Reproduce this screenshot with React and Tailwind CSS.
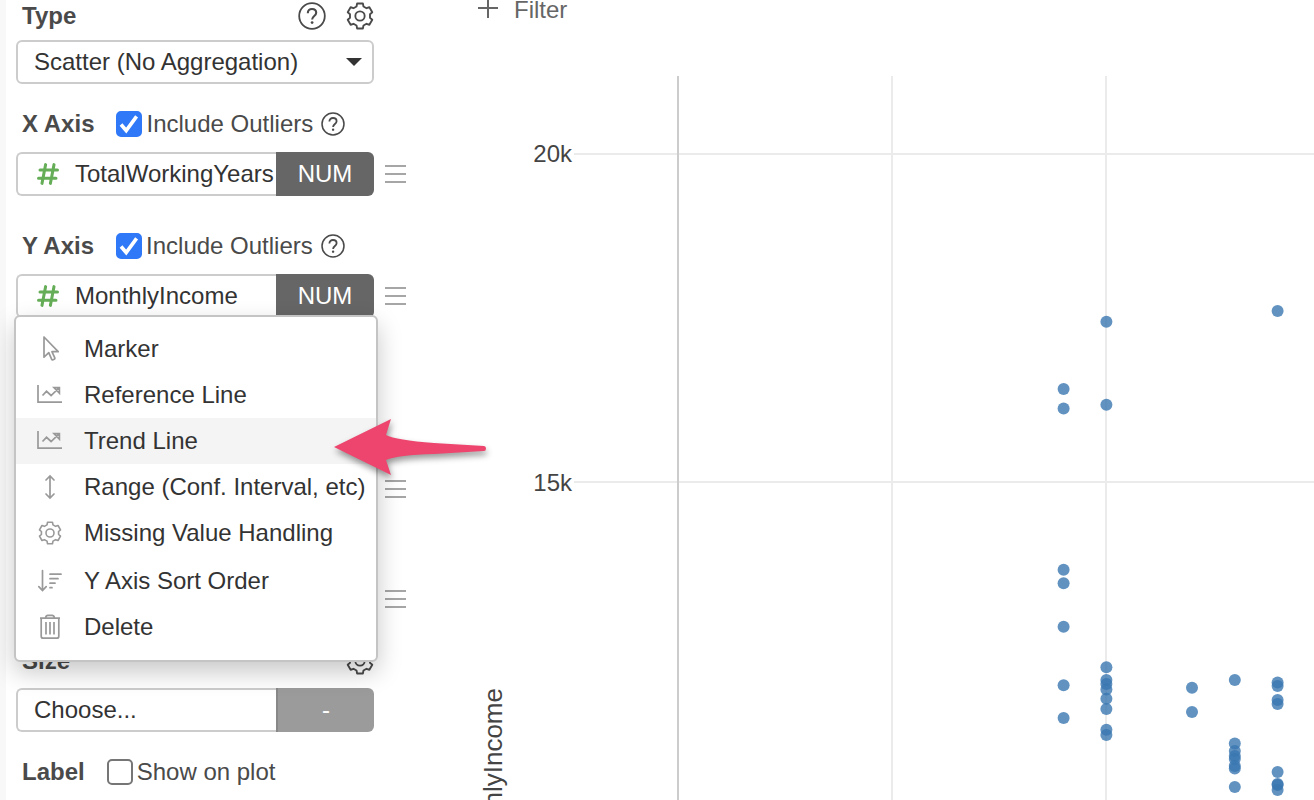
import React, { useState } from 'react';

const points = [
  [9, 16423], [9, 16126], [9, 13673], [9, 13466], [9, 12805], [9, 11913], [9, 11416],
  [10, 17448], [10, 16184], [10, 12187], [10, 11994], [10, 11933], [10, 11849], [10, 11709], [10, 11553], [10, 11237], [10, 11157],
  [12, 11875], [12, 11507],
  [13, 11994], [13, 11027], [13, 10913], [13, 10837], [13, 10791], [13, 10685], [13, 10647], [13, 10365],
  [14, 17610], [14, 11956], [14, 11903], [14, 11689], [14, 11629], [14, 10594], [14, 10411], [14, 10396], [14, 10320],
];

const xPos = (years) => 248.4 + years * 42.8;
const yPos = (income) => 134 + (20000 - income) * 0.0657;

const gearPath = () => {
  const corners = [];
  for (let i = 0; i < 6; i++) {
    const mid = i * 60 - 90;
    [[-20, 8.7], [-13, 11], [13, 11], [20, 8.7]].forEach(([offset, r]) => {
      const a = ((mid + offset) * Math.PI) / 180;
      corners.push(`${(12 + r * Math.cos(a)).toFixed(2)} ${(12 + r * Math.sin(a)).toFixed(2)}`);
    });
  }
  return `M${corners.join('L')}Z`;
};

const GearIcon = ({ className }) => (
  <svg viewBox="0 0 24 24" className={className} fill="none" stroke="currentColor" strokeWidth="1.6" strokeLinejoin="round">
    <path d={gearPath()} />
    <circle cx="12" cy="12" r="4" />
  </svg>
);

const HelpIcon = ({ className }) => (
  <svg viewBox="0 0 28 28" className={className} fill="none" stroke="currentColor" strokeWidth="1.8">
    <circle cx="14" cy="14" r="12.8" />
    <path d="M9.8 11.2c0-2.6 1.8-4.2 4.2-4.2s4.2 1.5 4.2 3.7c0 3.2-4.1 3.3-4.1 6.8" strokeWidth="2.1" />
    <circle cx="14.1" cy="20.6" r="1.4" fill="currentColor" stroke="none" />
  </svg>
);

const HashIcon = () => (
  <svg viewBox="0 0 22 22" className="w-[22px] h-[22px] shrink-0 text-[#65ae57]" fill="none" stroke="currentColor" strokeWidth="3" strokeLinecap="round">
    <path d="M3 7h17.5M1.5 15.2H19M8.6 1.6L5 20.4M17 1.6l-3.6 18.8" />
  </svg>
);

const MarkerIcon = () => (
  <svg viewBox="0 0 28 28" className="w-7 h-7" fill="none" stroke="currentColor" strokeWidth="1.7" strokeLinejoin="round">
    <path d="M8 2v20.2l4.8-4.5 2.9 6.600q.4.9 1.3.5l1.300-.6q.9-.4.5-1.300l-2.900-6.200h6.300z" />
  </svg>
);

const LineIcon = () => (
  <svg viewBox="0 0 28 28" className="w-7 h-7" fill="none" stroke="currentColor" strokeWidth="1.7">
    <path d="M2 4v17.2h24" />
    <path d="M6.5 14.500l4-4.200 4.600 4.200 8.200-7.800M18 6.600h5.400v5.600z" />
  </svg>
);

const RangeIcon = () => (
  <svg viewBox="0 0 28 28" className="w-7 h-7" fill="none" stroke="currentColor" strokeWidth="1.7" strokeLinecap="round">
    <path d="M14 3v22M10 7l4-4 4 4M10 21l4 4 4-4" />
  </svg>
);

const SortIcon = () => (
  <svg viewBox="0 0 28 28" className="w-7 h-7" fill="none" stroke="currentColor" strokeWidth="1.7" strokeLinecap="round">
    <path d="M6.5 3.5v20M2.8 19.600l3.700 4 3.700-4M14 7.200h11M14 11.700h8M14 16.200h5M14 20.700h2" />
  </svg>
);

const TrashIcon = () => (
  <svg viewBox="0 0 28 28" className="w-7 h-7" fill="none" stroke="currentColor" strokeWidth="1.7" strokeLinejoin="round">
    <path d="M4 5.200h20M5.200 5.200v18q0 2 2 2h13.600q2 0 2-2v-18M9.500 5q.6-2.600 2.300-2.600h4.400q1.700 0 2.300 2.600M10 9v12.600M14 9v12.600M18 9v12.600" />
  </svg>
);

const menuItems = [
  { label: 'Marker', icon: <MarkerIcon /> },
  { label: 'Reference Line', icon: <LineIcon /> },
  { label: 'Trend Line', icon: <LineIcon />, active: true },
  { label: 'Range (Conf. Interval, etc)', icon: <RangeIcon /> },
  { label: 'Missing Value Handling', icon: <GearIcon className="w-6 h-6 mx-0.5" /> },
  { label: 'Y Axis Sort Order', icon: <SortIcon />, spaced: true },
  { label: 'Delete', icon: <TrashIcon /> },
];

const Check = ({ id, label, checked, onChange }) => (
  <div className="flex items-center gap-1">
    <span className="grid w-[26px] h-[26px]">
      <input
        id={id}
        type="checkbox"
        checked={checked}
        onChange={onChange}
        className="col-start-1 row-start-1 w-[26px] h-[26px] appearance-none rounded-[5px] border-2 border-[#767676] bg-white checked:border-[#2f78f7] checked:bg-[#2f78f7]"
      />
      {checked && (
        <svg viewBox="0 0 26 26" className="col-start-1 row-start-1 pointer-events-none" fill="none" stroke="#fff" strokeWidth="3.6">
          <path d="M5 13.500l5.200 6L20.600 5.400" />
        </svg>
      )}
    </span>
    <label htmlFor={id}>{label}</label>
  </div>
);

const DragHandle = () => (
  <button type="button" aria-label="Options" className="flex flex-col justify-center gap-1.5 w-[21px] h-11">
    <span className="w-full h-0.5 bg-[#a6a6a6]"></span>
    <span className="w-full h-0.5 bg-[#a6a6a6]"></span>
    <span className="w-full h-0.5 bg-[#a6a6a6]"></span>
  </button>
);

const ColumnField = ({ name, type }) => (
  <div className="flex w-[358px] h-11 text-[#333]">
    <button type="button" className="flex items-center gap-4 w-[260px] pl-[19px] rounded-l-md border-2 border-r-0 border-[#ccc] whitespace-nowrap overflow-hidden">
      <HashIcon />
      {name}
    </button>
    <button type="button" className="flex-1 rounded-r-md bg-[#666] text-white">{type}</button>
  </div>
);

const AxisMenu = () => (
  <ul className="absolute top-[41px] -left-0.5 z-10 w-[364px] pt-[9px] pb-2.5 bg-white border-2 border-[#c4c4c4] rounded-md shadow-[0_10px_24px_rgba(0,0,0,0.22)] text-[#333]">
    {menuItems.map((item) => (
      <li key={item.label} className={item.spaced ? 'relative mt-0.5' : 'relative'}>
        <button
          type="button"
          className={`flex items-center gap-5 w-full h-[46px] pl-5 text-left whitespace-nowrap ${item.active ? 'bg-[#f4f4f4]' : ''}`}
        >
          <span className="text-[#999]">{item.icon}</span>
          {item.label}
        </button>
        {item.active && (
          <svg viewBox="0 0 156 62" className="absolute top-0 left-[318px] w-[156px] h-[62px] overflow-visible drop-shadow-[1px_4px_3px_rgba(0,0,0,0.4)] pointer-events-none">
            <path d="M0 29L57 1L52 17Q62 22 100 25L150 28Q152 28 152 30.500Q152 33 150 33L100 36Q64 37 52 42L57 57Z" fill="#ed456d" />
          </svg>
        )}
      </li>
    ))}
  </ul>
);

const Sidebar = () => {
  const [xOutliers, setXOutliers] = useState(true);
  const [yOutliers, setYOutliers] = useState(true);
  const [showLabel, setShowLabel] = useState(false);

  return (
    <aside className="w-[430px] shrink-0 pl-2.5 border-l-6 border-[#f8f8f8]">
      <div className="flex items-center w-[358px] h-8 pl-1.5">
        <label htmlFor="chartType" className="font-bold">Type</label>
        <button type="button" aria-label="Help" className="ml-auto"><HelpIcon className="w-7 h-7" /></button>
        <button type="button" aria-label="Settings" className="ml-5"><GearIcon className="w-7 h-7" /></button>
      </div>
      <div className="grid items-center w-[358px] mt-2 text-[#333]">
        <select id="chartType" className="col-start-1 row-start-1 w-full h-11 pl-4 appearance-none bg-white border-2 border-[#ccc] rounded-md">
          <option>Scatter (No Aggregation)</option>
        </select>
        <svg viewBox="0 0 16 8" className="col-start-1 row-start-1 justify-self-end w-4 h-2 mr-3 pointer-events-none">
          <path d="M0 0h16L8 8z" fill="#333" />
        </svg>
      </div>

      <div className="flex items-center h-8 mt-6 pl-1.5">
        <h2 className="font-bold mr-[22px]">X Axis</h2>
        <Check id="xOutliers" label="Include Outliers" checked={xOutliers} onChange={(e) => setXOutliers(e.target.checked)} />
        <button type="button" aria-label="Help" className="ml-2"><HelpIcon className="w-6 h-6" /></button>
      </div>
      <div className="flex gap-[11px] mt-3">
        <ColumnField name="TotalWorkingYears" type="NUM" />
        <DragHandle />
      </div>

      <div className="flex items-center h-8 mt-[34px] pl-1.5">
        <h2 className="font-bold mr-[22px]">Y Axis</h2>
        <Check id="yOutliers" label="Include Outliers" checked={yOutliers} onChange={(e) => setYOutliers(e.target.checked)} />
        <button type="button" aria-label="Help" className="ml-2"><HelpIcon className="w-6 h-6" /></button>
      </div>
      <div className="relative flex gap-[11px] mt-3">
        <ColumnField name="MonthlyIncome" type="NUM" />
        <DragHandle />
        <AxisMenu />
      </div>

      {/* rows under the open menu, only their handles show */}
      <div className="flex justify-end w-[390px] mt-[149px]"><DragHandle /></div>
      <div className="flex justify-end w-[390px] mt-[66px]"><DragHandle /></div>

      <div className="flex items-center justify-between w-[358px] h-8 mt-6 pl-1.5">
        <h2 className="font-bold">Size</h2>
        <button type="button" aria-label="Settings"><GearIcon className="w-7 h-7" /></button>
      </div>
      <div className="flex w-[358px] h-11 mt-[11px] text-[#333]">
        <button type="button" className="w-[260px] pl-4 rounded-l-md border-2 border-r-0 border-[#ccc] text-left">Choose...</button>
        <button type="button" className="flex-1 rounded-r-md border-l-2 border-[#888] bg-[#9b9b9b] text-white">-</button>
      </div>

      <div className="flex items-center h-8 mt-6 pl-1.5">
        <h2 className="font-bold mr-[22px]">Label</h2>
        <Check id="showLabel" label="Show on plot" checked={showLabel} onChange={(e) => setShowLabel(e.target.checked)} />
      </div>
    </aside>
  );
};

const ScatterPlot = () => (
  <svg className="w-full flex-1">
    <g fill="#ebebeb">
      <rect x="144" y="133" width="100%" height="2" />
      <rect x="144" y="461" width="100%" height="2" />
      <rect x="461" y="56" width="2" height="100%" />
      <rect x="675" y="56" width="2" height="100%" />
    </g>
    <rect x="247" y="56" width="2" height="100%" fill="#ccc" />
    <g fill="#444" fontSize="24" textAnchor="end">
      <text x="142" y="142">20k</text>
      <text x="142" y="471">15k</text>
      <text transform="translate(72 668) rotate(-90)" fontSize="26">MonthlyIncome</text>
    </g>
    <g fill="#3a77b0" fillOpacity="0.8">
      {points.map(([years, income], i) => (
        <circle key={i} cx={xPos(years)} cy={yPos(income)} r="6" />
      ))}
    </g>
  </svg>
);

const App = () => {
  return (
    <div className="flex h-screen overflow-hidden bg-white text-[24px] leading-8 text-[#4a4a4a] font-['Helvetica_Neue','Liberation_Sans',Arial,sans-serif]">
      <Sidebar />
      <main className="flex flex-col flex-1 min-w-0">
        <button type="button" className="flex items-center gap-4 h-5 pl-12 leading-5 text-[#666]">
          <svg viewBox="0 0 20 20" className="w-5 h-5" stroke="currentColor" strokeWidth="2">
            <path d="M0 8h20M10 -2v20" />
          </svg>
          Filter
        </button>
        <ScatterPlot />
      </main>
    </div>
  );
};

export default App;
